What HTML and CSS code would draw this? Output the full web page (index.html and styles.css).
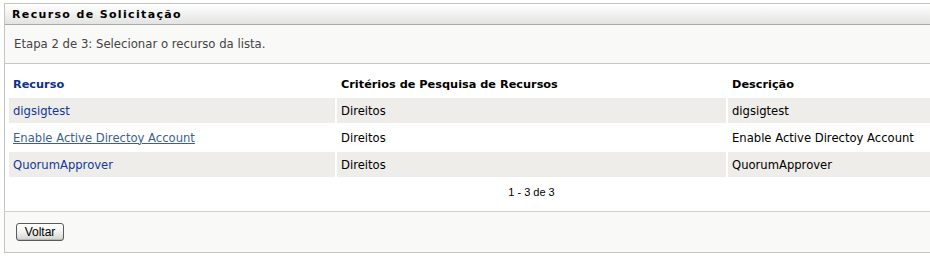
FILE: index.html
```html
<!DOCTYPE html>
<html lang="pt">
<head>
<meta charset="utf-8">
<title>Recurso de Solicitação</title>
<link rel="stylesheet" href="styles.css">
</head>
<body>
<div class="panel">
  <div class="panel-head">Recurso de Solicitação</div>
  <div class="step">Etapa 2 de 3: Selecionar o recurso da lista.</div>
  <div class="content">
    <table class="grid">
      <colgroup>
        <col class="c1"><col class="c2"><col class="c3">
      </colgroup>
      <thead>
        <tr>
          <th class="sort">Recurso</th>
          <th>Critérios de Pesquisa de Recursos</th>
          <th>Descrição</th>
        </tr>
      </thead>
      <tbody>
        <tr class="odd">
          <td><a href="#" class="res">digsigtest</a></td>
          <td>Direitos</td>
          <td>digsigtest</td>
        </tr>
        <tr>
          <td><a href="#" class="res hover">Enable Active Directoy Account</a></td>
          <td>Direitos</td>
          <td>Enable Active Directoy Account</td>
        </tr>
        <tr class="odd">
          <td><a href="#" class="res">QuorumApprover</a></td>
          <td>Direitos</td>
          <td>QuorumApprover</td>
        </tr>
      </tbody>
    </table>
    <div class="pager">1 - 3 de 3</div>
  </div>
  <div class="footer">
    <button class="btn" type="button">Voltar</button>
  </div>
</div>
</body>
</html>
```
FILE: styles.css
```css
html {
  overflow: hidden;
}
body {
  margin: 0;
  background: #ffffff;
  font-family: "DejaVu Sans", Verdana, sans-serif;
  font-size: 11px;
  color: #000;
}
.panel {
  margin: 3px 0 0 4px;
  width: 1051px;
  border: 1px solid #c4c4c4;
  background: #ffffff;
}
.panel-head {
  height: 20px;
  line-height: 21px;
  padding-left: 7px;
  font-weight: bold;
  font-size: 11px;
  letter-spacing: 1.35px;
  color: #000;
  background: linear-gradient(#ffffff, #e3e3e1);
  border-bottom: 1px solid #a9a9a9;
}
.step {
  height: 38px;
  line-height: 39px;
  padding-left: 9px;
  font-size: 11.7px;
  color: #444444;
  background: #f9f9f7;
  border-bottom: 1px solid #c8c8c8;
}
.content {
  padding: 0 0 0 2px;
  background: #ffffff;
}
.grid {
  width: 1049px;
  border-collapse: separate;
  border-spacing: 2px 2px;
  margin: 0;
  table-layout: fixed;
}
.c1 { width: 326px; }
.c2 { width: 389px; }
.c3 { width: auto; }
.grid th {
  box-sizing: border-box;
  text-align: left;
  font-weight: bold;
  font-size: 11.3px;
  height: 30px;
  padding: 6px 3px 0 4px;
  color: #000;
  vertical-align: middle;
}
.grid th.sort {
  color: #0d2f8f;
}
.grid td {
  box-sizing: border-box;
  height: 25px;
  padding: 0 3px 0 4px;
  font-size: 11.6px;
  vertical-align: middle;
  white-space: nowrap;
}
.grid tr.odd td {
  background: #eeede9;
}
.res {
  color: #12389c;
  text-decoration: none;
}
.res.hover {
  color: #3e5f8e;
  text-decoration: underline;
}
.pager {
  text-align: center;
  font-family: "Liberation Sans", Arial, sans-serif;
  font-size: 11px;
  height: 32px;
  line-height: 26px;
  color: #000;
}
.footer {
  height: 41px;
  background: #f9f9f7;
  border-top: 1px solid #d0d0d0;
  padding: 11px 0 0 11px;
  box-sizing: border-box;
}
.btn {
  display: block;
  width: 48px;
  height: 18px;
  padding: 0;
  font-family: "Liberation Sans", Arial, sans-serif;
  font-size: 12px;
  line-height: 16px;
  color: #000;
  border: 1px solid #5a5a5a;
  border-radius: 3px;
  background: linear-gradient(#ffffff 0%, #f4f4f2 45%, #d9d9d6 90%, #c4c4c0 100%);
  box-shadow: inset 0 -1px 0 #b8b8b4;
}
```
